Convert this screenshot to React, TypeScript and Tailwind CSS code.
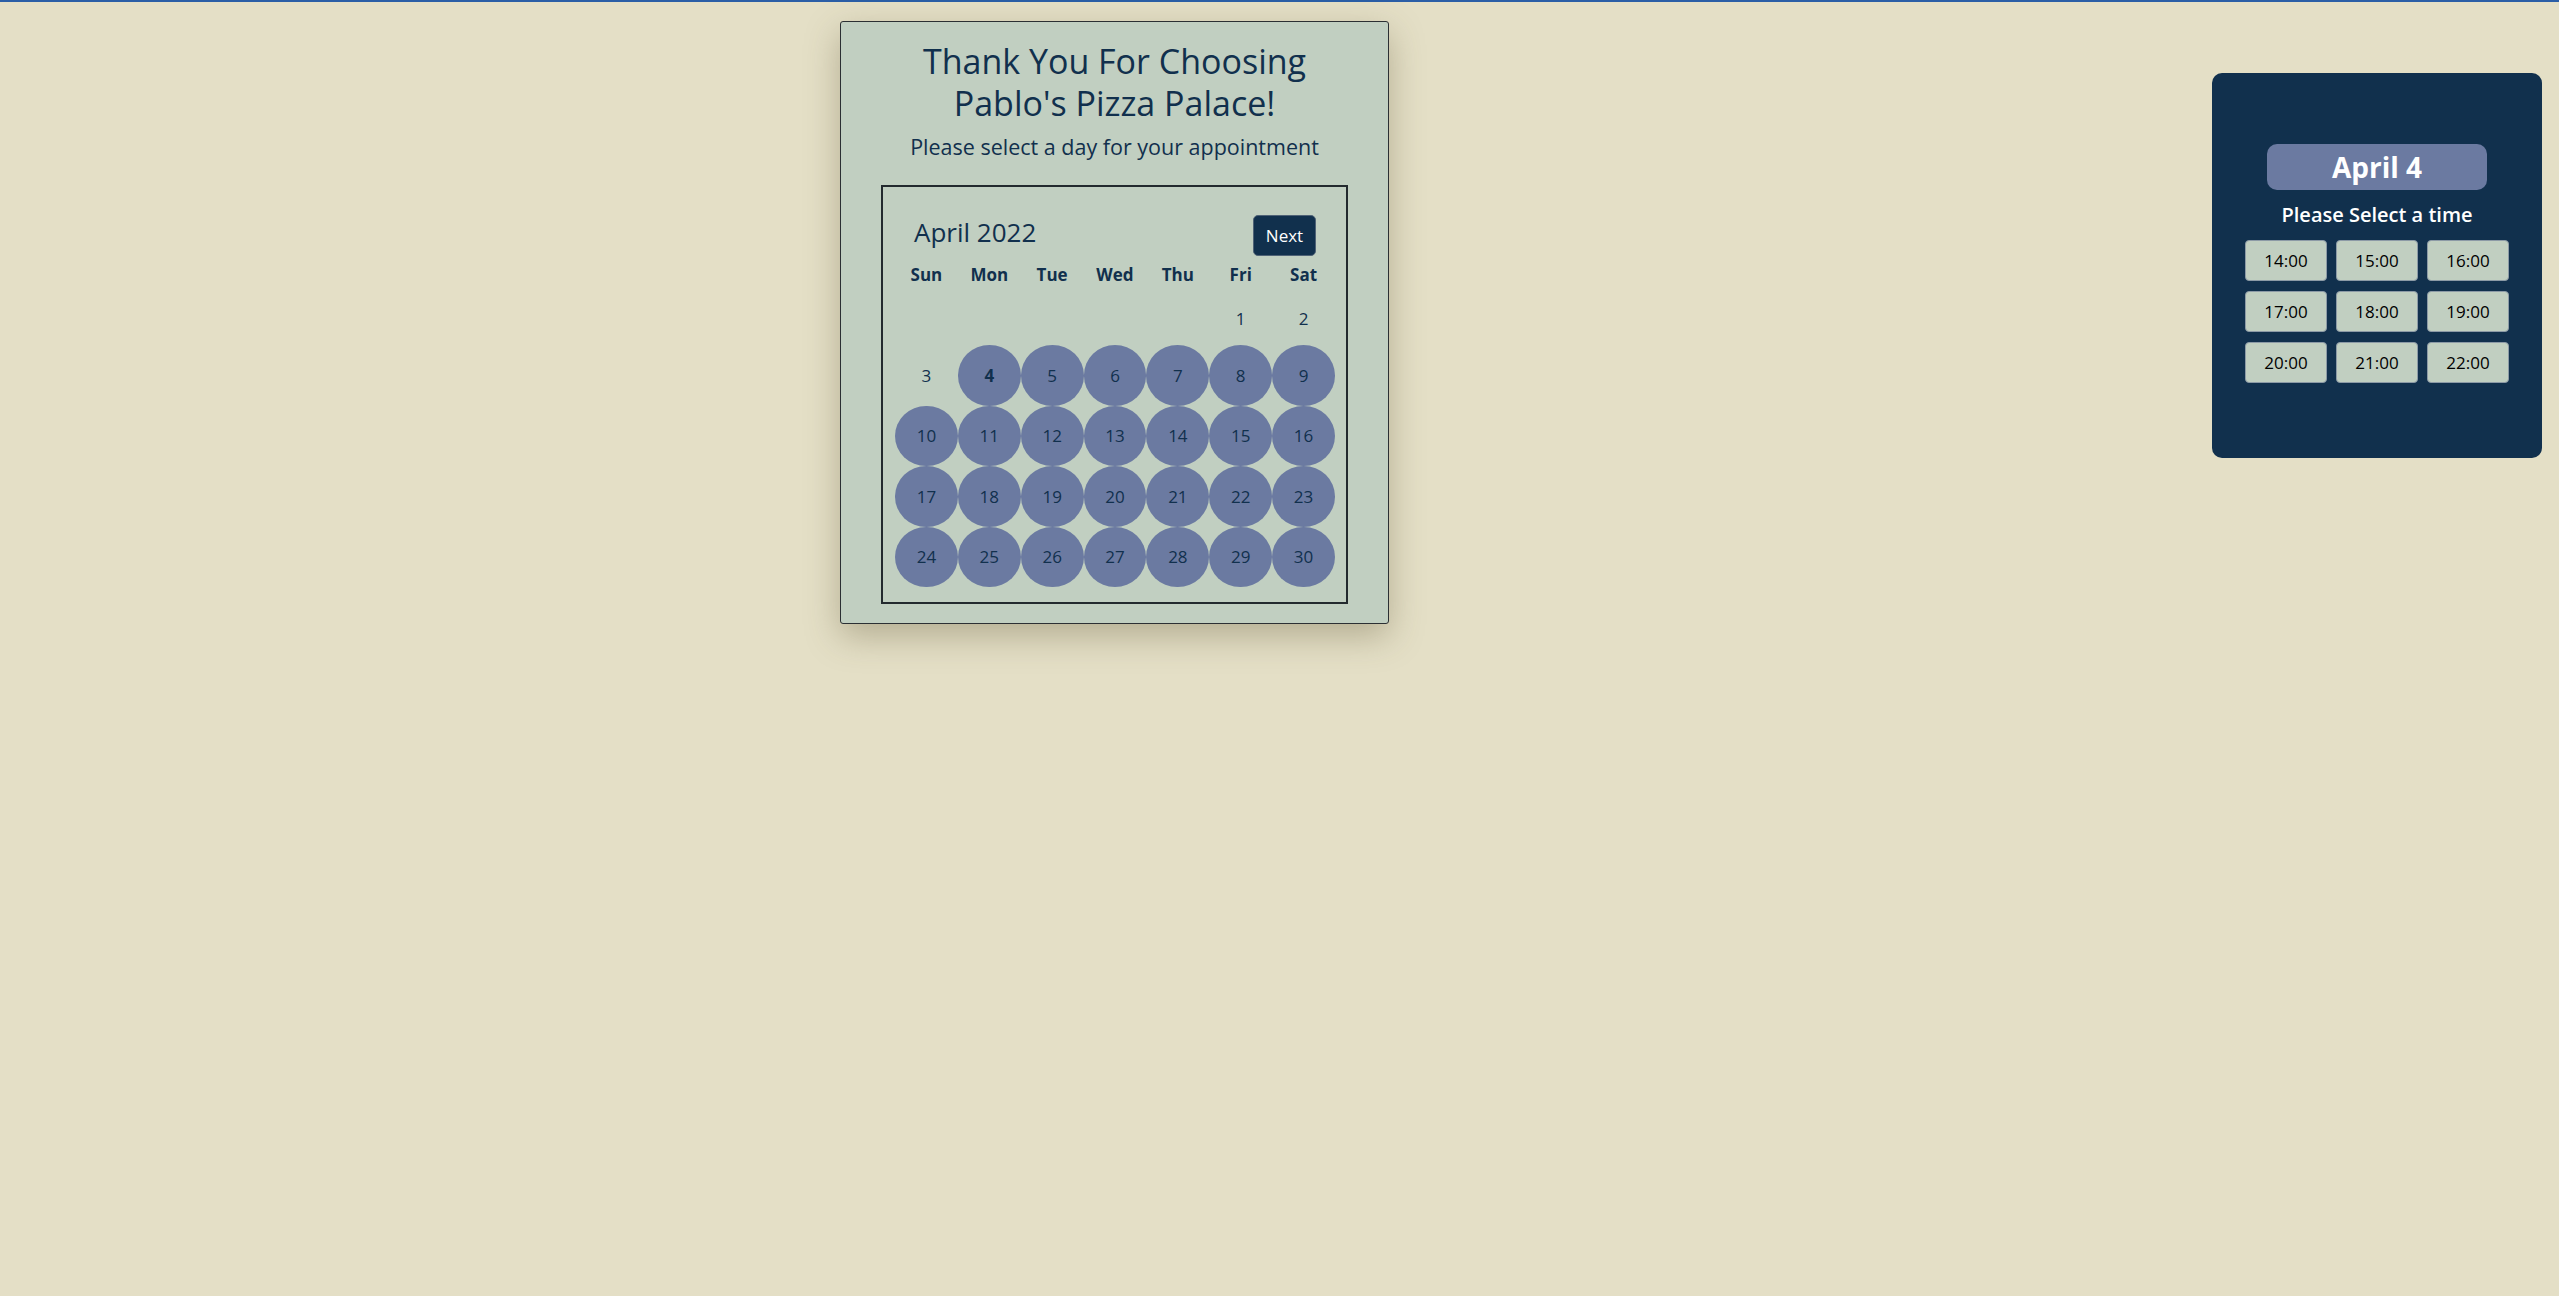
const days: (number | null)[] = [
  null, null, null, null, null, 1, 2,
  3, 4, 5, 6, 7, 8, 9,
  10, 11, 12, 13, 14, 15, 16,
  17, 18, 19, 20, 21, 22, 23,
  24, 25, 26, 27, 28, 29, 30,
];

const weekdays = ["Sun", "Mon", "Tue", "Wed", "Thu", "Fri", "Sat"];
const times = ["14:00", "15:00", "16:00", "17:00", "18:00", "19:00", "20:00", "21:00", "22:00"];

function Calendar() {
  const firstRow = days.slice(0, 7);
  const rest = days.slice(7);
  return (
    <div className="mx-[40px] mt-[22px] border-2 border-[#232a2e] px-[12px] pb-[15px] pt-[28px] pr-[11px]">
      <div className="flex h-[41px] items-center justify-between px-[19px]">
        <h2 className="-mt-[6px] text-[26px] font-normal">April 2022</h2>
        <button
          type="button"
          className="h-[41px] w-[63px] rounded-[5px] border border-[#4f6276] bg-[#11304d] text-[17px] text-white"
        >
          Next
        </button>
      </div>
      <div className="grid h-[36px] grid-cols-7 items-center text-center text-[17px] font-bold">
        {weekdays.map((d) => (
          <div key={d}>{d}</div>
        ))}
      </div>
      <div className="grid h-[53px] grid-cols-7 items-center text-center text-[17px]">
        {firstRow.map((d, i) => (
          <div key={i}>{d ?? ""}</div>
        ))}
      </div>
      <div className="grid grid-cols-7 grid-rows-[repeat(4,60.5px)] text-center text-[17px]">
        {rest.map((d) => (
          <div
            key={d}
            className={
              d === 3
                ? "flex items-center justify-center"
                : d === 4
                  ? "flex items-center justify-center rounded-[50%] bg-[#6b7aa1] font-bold"
                  : "flex items-center justify-center rounded-[50%] bg-[#6b7aa1]"
            }
          >
            {d}
          </div>
        ))}
      </div>
    </div>
  );
}

function TimePanel() {
  return (
    <div className="mt-[71px] flex h-[385px] w-[330px] flex-col items-center rounded-[10px] bg-[#11304d] pt-[71px]">
      <div className="flex h-[46px] w-[220px] items-center justify-center rounded-[10px] bg-[#6b7aa1] text-[28px] font-bold text-white">
        April 4
      </div>
      <p className="mt-[10px] text-[20px] font-semibold text-white">Please Select a time</p>
      <div className="mt-[10px] grid grid-cols-[82px_82px_82px] gap-x-[9px] gap-y-[10px]">
        {times.map((t) => (
          <button
            key={t}
            type="button"
            className="h-[41px] rounded-[4px] border border-[#8c9aa6] bg-[#c1cfc1] text-[17px] text-black"
          >
            {t}
          </button>
        ))}
      </div>
    </div>
  );
}

export default function App() {
  return (
    <div
      className="min-h-screen border-t-2 border-[#2b5ea6] bg-[#e4dfc6] text-[#11304d]"
      style={{ fontFamily: '"Open Sans", "Noto Sans", sans-serif' }}
    >
      <div className="flex items-start justify-between pl-[840px] pr-[17px]">
        <div className="mt-[19px] w-[549px] rounded-[3px] border border-[#2b2f33] bg-[#c1cfc1] pb-[19px] pt-[18px] shadow-[0_12px_34px_rgba(90,80,50,0.35)]">
          <h1 className="text-center text-[34px] leading-[42px] font-normal">
            Thank You For Choosing
            <br />
            Pablo's Pizza Palace!
          </h1>
          <p className="mt-[7px] text-center text-[21.5px]">Please select a day for your appointment</p>
          <Calendar />
        </div>
        <TimePanel />
      </div>
    </div>
  );
}
